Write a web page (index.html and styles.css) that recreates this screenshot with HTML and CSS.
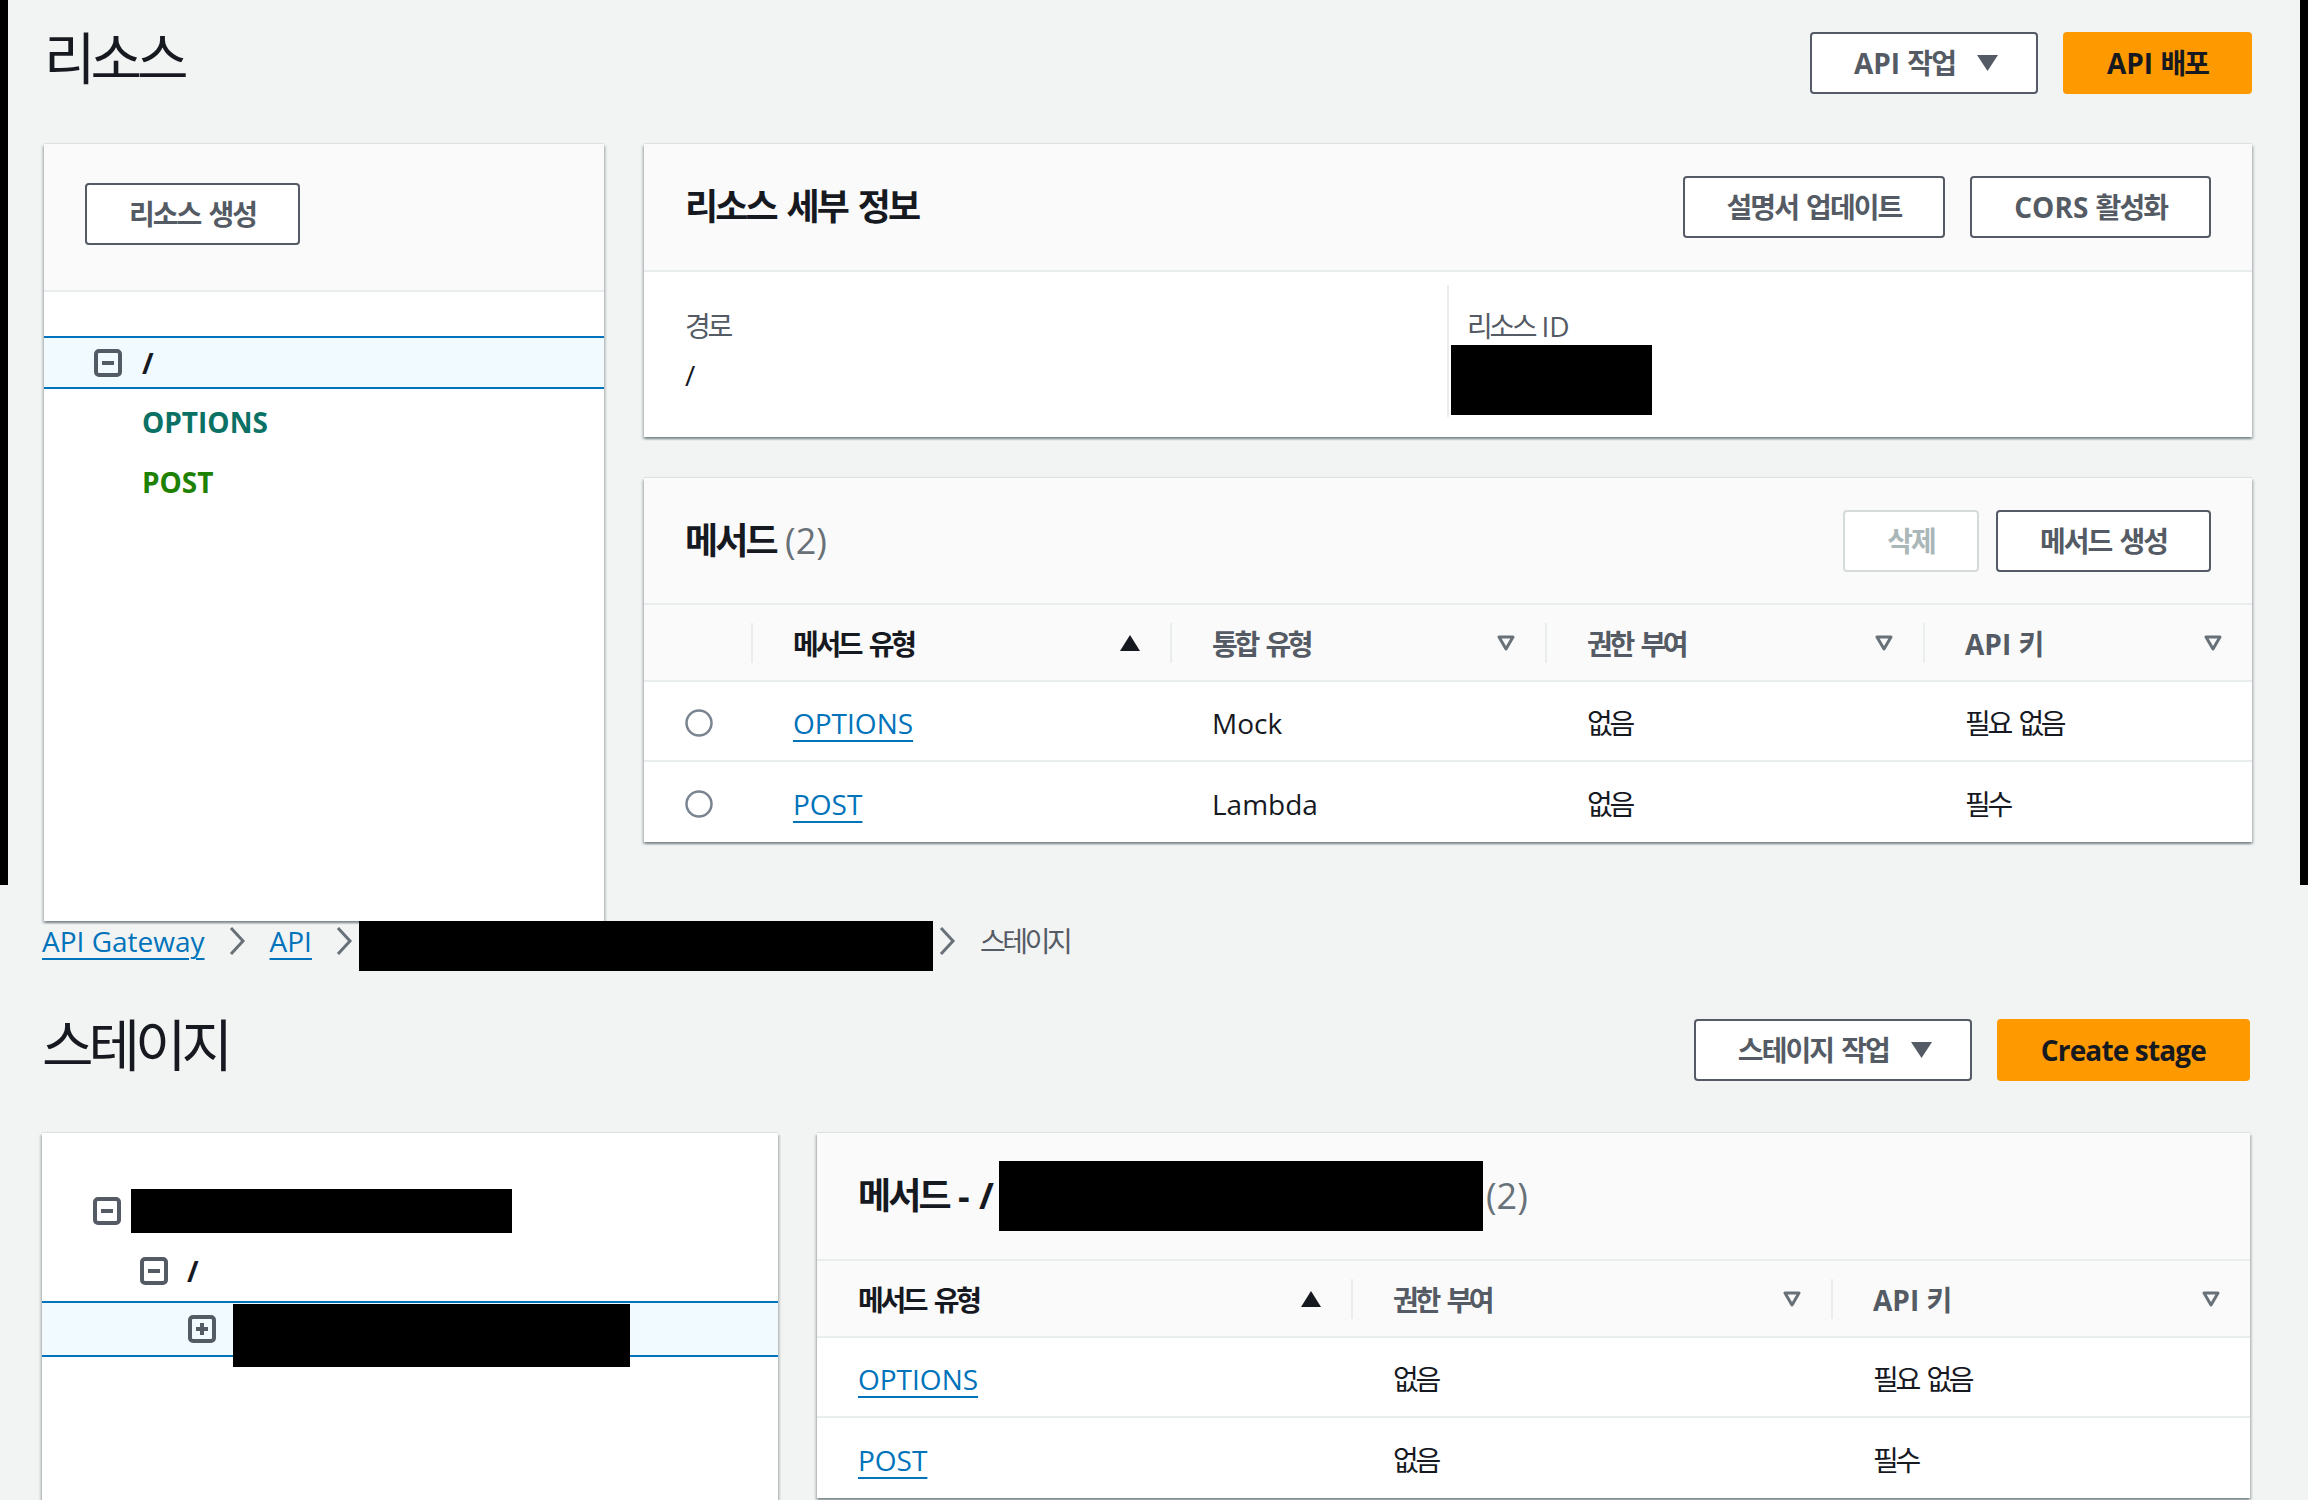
FILE: index.html
```html
<!DOCTYPE html>
<html lang="ko">
<head>
<meta charset="utf-8">
<title>API Gateway</title>
<link rel="stylesheet" href="styles.css">
</head>
<body>
<div class="shot shot-top">
  <header class="page-head">
    <h1 class="page-title"><span class="ko">리소스</span></h1>
    <div class="actions">
      <button class="btn btn-caret"><span class="btn-label">API <span class="ko">작업</span></span>
        <svg class="caret" width="21" height="16" viewBox="0 0 21 16"><path d="M0 0H21L10.5 16Z" fill="#545b64"/></svg>
      </button>
      <button class="btn btn-primary"><span class="btn-label">API <span class="ko">배포</span></span></button>
    </div>
  </header>

  <div class="res-layout">
    <aside class="panel tree-panel">
      <div class="tree-head">
        <button class="btn"><span class="btn-label ko">리소스 생성</span></button>
      </div>
      <ul class="tree">
        <li class="tree-row selected">
          <svg width="28" height="28" viewBox="0 0 28 28"><rect x="2" y="2" width="24" height="24" rx="3" fill="none" stroke="#545b64" stroke-width="4"/><rect x="8" y="12" width="12" height="4" fill="#545b64"/></svg>
          <span class="tree-path">/</span>
        </li>
        <li class="tree-method m-options">OPTIONS</li>
        <li class="tree-method m-post">POST</li>
      </ul>
    </aside>

    <div class="res-main">
      <section class="panel">
        <div class="panel-head">
          <h2 class="panel-title"><span class="ko">리소스 세부 정보</span></h2>
          <div class="actions">
            <button class="btn"><span class="btn-label ko">설명서 업데이트</span></button>
            <button class="btn"><span class="btn-label">CORS <span class="ko">활성화</span></span></button>
          </div>
        </div>
        <div class="kv">
          <div class="kv-col">
            <div class="kv-label"><span class="ko">경로</span></div>
            <div class="kv-value">/</div>
          </div>
          <div class="kv-col">
            <div class="kv-label"><span class="ko">리소스</span> ID</div>
            <div class="redact redact-id"></div>
          </div>
        </div>
      </section>

      <section class="panel">
        <div class="panel-head head-methods">
          <h2 class="panel-title"><span class="ko">메서드</span> <span class="count">(2)</span></h2>
          <div class="actions actions-tight">
            <button class="btn btn-disabled"><span class="btn-label ko">삭제</span></button>
            <button class="btn"><span class="btn-label ko">메서드 생성</span></button>
          </div>
        </div>
        <div class="grid-table cols-res">
          <div class="trow thead">
            <div></div>
            <div class="th th-active"><span class="th-label ko">메서드 유형</span>
              <svg width="20" height="16" viewBox="0 0 20 16"><path d="M10 0L20 16H0Z" fill="#16191f"/></svg></div>
            <div class="th"><span class="th-label ko">통합 유형</span>
              <svg width="18" height="16" viewBox="0 0 18 16"><path d="M2 2H16L9 14Z" fill="none" stroke="#687078" stroke-width="3" stroke-linejoin="round"/></svg></div>
            <div class="th"><span class="th-label ko">권한 부여</span>
              <svg width="18" height="16" viewBox="0 0 18 16"><path d="M2 2H16L9 14Z" fill="none" stroke="#687078" stroke-width="3" stroke-linejoin="round"/></svg></div>
            <div class="th"><span class="th-label">API <span class="ko">키</span></span>
              <svg width="18" height="16" viewBox="0 0 18 16"><path d="M2 2H16L9 14Z" fill="none" stroke="#687078" stroke-width="3" stroke-linejoin="round"/></svg></div>
          </div>
          <div class="trow">
            <div class="td td-radio"><svg width="28" height="28" viewBox="0 0 28 28"><circle cx="14" cy="14" r="12.5" fill="#fff" stroke="#7a8490" stroke-width="2.5"/></svg></div>
            <div class="td"><a class="link">OPTIONS</a></div>
            <div class="td">Mock</div>
            <div class="td"><span class="ko">없음</span></div>
            <div class="td"><span class="ko">필요 없음</span></div>
          </div>
          <div class="trow">
            <div class="td td-radio"><svg width="28" height="28" viewBox="0 0 28 28"><circle cx="14" cy="14" r="12.5" fill="#fff" stroke="#7a8490" stroke-width="2.5"/></svg></div>
            <div class="td"><a class="link">POST</a></div>
            <div class="td">Lambda</div>
            <div class="td"><span class="ko">없음</span></div>
            <div class="td"><span class="ko">필수</span></div>
          </div>
        </div>
      </section>
    </div>
  </div>
</div>

<div class="shot shot-bottom">
  <nav class="crumbs">
    <a class="link crumb">API Gateway</a>
    <svg class="crumb-sep" width="18" height="30" viewBox="0 0 18 30"><path d="M3 2L15 15L3 28" fill="none" stroke="#687078" stroke-width="3"/></svg>
    <a class="link crumb">API</a>
    <svg class="crumb-sep" width="18" height="30" viewBox="0 0 18 30"><path d="M3 2L15 15L3 28" fill="none" stroke="#687078" stroke-width="3"/></svg>
    <div class="redact crumb-redact"></div>
    <svg class="crumb-sep" width="18" height="30" viewBox="0 0 18 30"><path d="M3 2L15 15L3 28" fill="none" stroke="#687078" stroke-width="3"/></svg>
    <span class="crumb-current"><span class="ko">스테이지</span></span>
  </nav>

  <header class="page-head">
    <h1 class="page-title"><span class="ko">스테이지</span></h1>
    <div class="actions">
      <button class="btn btn-caret"><span class="btn-label ko">스테이지 작업</span>
        <svg class="caret" width="21" height="16" viewBox="0 0 21 16"><path d="M0 0H21L10.5 16Z" fill="#545b64"/></svg>
      </button>
      <button class="btn btn-primary btn-latin"><span class="btn-label">Create stage</span></button>
    </div>
  </header>

  <div class="stage-layout">
    <aside class="panel stage-tree">
      <ul class="tree stree">
        <li class="srow lvl0">
          <svg width="28" height="28" viewBox="0 0 28 28"><rect x="2" y="2" width="24" height="24" rx="3" fill="none" stroke="#545b64" stroke-width="4"/><rect x="8" y="12" width="12" height="4" fill="#545b64"/></svg>
          <div class="redact stage-redact"></div>
        </li>
        <li class="srow lvl1">
          <svg width="28" height="28" viewBox="0 0 28 28"><rect x="2" y="2" width="24" height="24" rx="3" fill="none" stroke="#545b64" stroke-width="4"/><rect x="8" y="12" width="12" height="4" fill="#545b64"/></svg>
          <span class="tree-path">/</span>
        </li>
        <li class="srow lvl2 selected">
          <svg width="28" height="28" viewBox="0 0 28 28"><rect x="2" y="2" width="24" height="24" rx="3" fill="none" stroke="#545b64" stroke-width="4"/><rect x="8" y="12" width="12" height="4" fill="#545b64"/><rect x="12" y="8" width="4" height="12" fill="#545b64"/></svg>
          <div class="redact method-redact"></div>
        </li>
      </ul>
    </aside>

    <section class="panel stage-main">
      <div class="panel-head">
        <h2 class="panel-title title-flex"><span class="title-text"><span class="ko">메서드</span> - /</span><span class="redact title-redact"></span><span class="count">(2)</span></h2>
      </div>
      <div class="grid-table cols-stage">
        <div class="trow thead">
          <div class="th th-active th-first"><span class="th-label ko">메서드 유형</span>
            <svg width="20" height="16" viewBox="0 0 20 16"><path d="M10 0L20 16H0Z" fill="#16191f"/></svg></div>
          <div class="th"><span class="th-label ko">권한 부여</span>
            <svg width="18" height="16" viewBox="0 0 18 16"><path d="M2 2H16L9 14Z" fill="none" stroke="#687078" stroke-width="3" stroke-linejoin="round"/></svg></div>
          <div class="th"><span class="th-label">API <span class="ko">키</span></span>
            <svg width="18" height="16" viewBox="0 0 18 16"><path d="M2 2H16L9 14Z" fill="none" stroke="#687078" stroke-width="3" stroke-linejoin="round"/></svg></div>
        </div>
        <div class="trow">
          <div class="td td-first"><a class="link">OPTIONS</a></div>
          <div class="td"><span class="ko">없음</span></div>
          <div class="td"><span class="ko">필요 없음</span></div>
        </div>
        <div class="trow">
          <div class="td td-first"><a class="link">POST</a></div>
          <div class="td"><span class="ko">없음</span></div>
          <div class="td"><span class="ko">필수</span></div>
        </div>
      </div>
    </section>
  </div>
</div>
</body>
</html>
```

FILE: styles.css
```css
* { box-sizing: border-box; }

html, body {
  margin: 0;
  padding: 0;
  background: #f2f3f3;
}

body {
  width: 2308px;
  height: 1500px;
  overflow: hidden;
  font-family: "Open Sans", "Noto Sans CJK KR", sans-serif;
  font-size: 28px;
  color: #16191f;
}

/* Hangul set tighter, spaces restored */
.ko {
  letter-spacing: -0.12em;
  word-spacing: 0.17em;
}

/* ---------- shots ---------- */
.shot-top {
  position: relative;
  height: 921px;
  padding: 0 56px 0 44px;
}
.shot-top::before,
.shot-top::after {
  content: "";
  position: absolute;
  top: 0;
  width: 8px;
  height: 885px;
  background: #000;
}
.shot-top::before { left: 0; }
.shot-top::after { right: 0; }

.shot-bottom {
  height: 579px;
  overflow: hidden;
  padding: 0 58px 0 42px;
}

/* ---------- page header ---------- */
.page-head {
  display: flex;
  justify-content: space-between;
  align-items: flex-start;
}
.shot-top .page-head { padding-top: 32px; height: 144px; }
.shot-bottom .page-head { padding-top: 58px; height: 172px; }

.page-title {
  margin: -6px 0 0;
  font-size: 56px;
  font-weight: 400;
  line-height: 62px;
}
.page-title .ko { letter-spacing: -0.09em; }

.actions { display: flex; gap: 25px; }
.actions-tight { gap: 17px; }

/* ---------- buttons ---------- */
.btn {
  height: 62px;
  display: inline-flex;
  align-items: center;
  gap: 22px;
  padding: 0 42px;
  border: 2px solid #545b64;
  border-radius: 4px;
  background: #fff;
  color: #545b64;
  font-family: "Open Sans", "Noto Sans CJK KR", sans-serif;
  font-size: 28px;
  font-weight: 700;
  line-height: 1;
  white-space: nowrap;
}
.btn .ko { letter-spacing: -0.07em; word-spacing: 0.1em; }
.btn-caret { padding-right: 38px; }
.btn-primary {
  background: #ff9900;
  border-color: #ff9900;
  color: #16191f;
}
.btn-latin { letter-spacing: -0.03em; }
.btn-disabled {
  border-color: #d5dbdb;
  color: #aab7b8;
}

/* ---------- panels ---------- */
.panel {
  background: #fff;
  box-shadow: 0 2px 2px 0 rgba(0, 28, 36, 0.3),
              2px 2px 2px 0 rgba(0, 28, 36, 0.15),
              -2px 2px 2px 0 rgba(0, 28, 36, 0.15),
              0 -1px 1px 0 rgba(0, 28, 36, 0.08);
}

.panel-head {
  display: flex;
  justify-content: space-between;
  align-items: center;
  padding: 32px 41px;
  background: #fafafa;
  border-bottom: 2px solid #eaeded;
}
.head-methods { padding-bottom: 31px; }

.panel-title {
  margin: 0;
  font-size: 36px;
  font-weight: 700;
  line-height: 62px;
  white-space: nowrap;
}
.panel-title .ko { letter-spacing: -0.08em; word-spacing: 0.12em; }
.count { color: #687078; font-weight: 400; }

/* ---------- resources layout ---------- */
.res-layout {
  display: flex;
  gap: 40px;
  align-items: flex-start;
  height: 777px;
}
.tree-panel {
  width: 560px;
  height: 777px;
  flex: none;
}
.res-main {
  flex: 1;
  display: flex;
  flex-direction: column;
  gap: 41px;
}

.tree-head {
  background: #fafafa;
  padding: 39px 0 45px 41px;
  border-bottom: 2px solid #eaeded;
}

.tree {
  list-style: none;
  margin: 0;
  padding: 44px 0 0;
}
.tree-row {
  display: flex;
  align-items: center;
  gap: 20px;
  height: 53px;
  padding-left: 50px;
}
.selected {
  background: #f1faff;
  border-top: 2px solid #0073bb;
  border-bottom: 2px solid #0073bb;
}
.tree-path { font-weight: 700; line-height: 40px; }

.tree-method {
  line-height: 60px;
  padding-left: 98px;
  font-weight: 700;
}
.tree-row + .tree-method { margin-top: 3px; }
.m-options { color: #0b7164; }
.m-post { color: #1d8102; }

/* ---------- key/value ---------- */
.kv {
  display: grid;
  grid-template-columns: 803px 1fr;
  padding: 13px 0 20px;
}
.kv-col { padding: 23px 41px 22px; }
.kv-col + .kv-col {
  border-left: 2px solid #eaeded;
  padding-left: 18px;
  padding-bottom: 0;
}
.kv-label { color: #545b64; line-height: 36px; }
.kv-value { margin-top: 11px; line-height: 40px; }

.redact { background: #000; flex: none; }
.redact-id {
  width: 201px;
  height: 70px;
  margin: 1px 0 0 -16px;
}

/* ---------- tables ---------- */
.trow {
  display: grid;
  align-items: center;
  height: 80px;
  border-bottom: 2px solid #eaeded;
}
.trow:last-child { border-bottom: 0; }
.cols-res .trow { grid-template-columns: 107px 419px 375px 378px 1fr; }
.cols-stage .trow { grid-template-columns: 534px 480px 1fr; }

.thead {
  height: 77px;
  background: #fafafa;
}
.th {
  display: flex;
  align-items: center;
  justify-content: space-between;
  height: 40px;
  border-left: 2px solid #eaeded;
  padding: 0 30px 0 40px;
  font-weight: 700;
  color: #545b64;
  white-space: nowrap;
}
.th-active { color: #16191f; }
.th-first { border-left: 0; padding-left: 41px; }

.td { padding-left: 42px; white-space: nowrap; line-height: 40px; padding-top: 3px; }
.td-first { padding-left: 41px; }
.td-radio { padding-left: 41px; display: flex; align-items: center; }
.td-radio svg { display: block; }

.link {
  color: #0073bb;
  text-decoration: underline;
  text-decoration-thickness: 2px;
  text-underline-offset: 6px;
}

/* ---------- breadcrumbs ---------- */
.crumbs {
  display: flex;
  align-items: center;
  height: 40px;
  line-height: 40px;
}
.crumb-sep { flex: none; margin: 0 24px 0 23px; }
.crumb-redact {
  width: 574px;
  height: 59px;
  margin: 0 -18px 0 -18px;
  position: relative;
}
.crumb-current { color: #545b64; }

/* ---------- stages layout ---------- */
.stage-layout {
  display: flex;
  gap: 39px;
  height: 380px;
}
.stage-tree {
  width: 736px;
  flex: none;
}
.stage-main { flex: 1; align-self: flex-start; }

.stree { padding-top: 48px; }
.srow {
  display: flex;
  align-items: center;
  height: 60px;
}
.srow svg { flex: none; }
.lvl0 { padding-left: 51px; gap: 10px; }
.lvl1 { padding-left: 98px; gap: 19px; }
.lvl2 {
  height: 56px;
  padding-left: 146px;
  gap: 17px;
  align-items: flex-start;
}
.lvl2 svg { margin-top: 12px; }

.stage-redact { width: 381px; height: 44px; }
.method-redact { width: 397px; height: 63px; margin-top: 1px; }

.title-flex { display: flex; align-items: center; }
.title-text { width: 141px; flex: none; overflow: hidden; }
.title-redact {
  width: 484px;
  height: 70px;
  margin: -4px 3px -4px 0;
}
```
